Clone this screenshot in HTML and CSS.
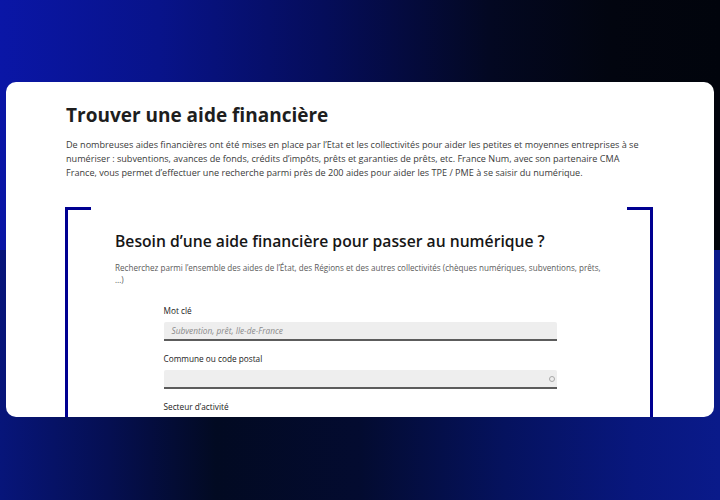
FILE: index.html
```html
<!DOCTYPE html>
<html lang="fr">
<head>
<meta charset="utf-8">
<title>Trouver une aide financière</title>
<link rel="stylesheet" href="styles.css">
</head>
<body>
<div class="page">
  <main class="card">
    <h1 class="title">Trouver une aide financière</h1>
    <p class="intro">De nombreuses aides financières ont été mises en place par l’Etat et les collectivités pour aider les petites et moyennes entreprises à se numériser : subventions, avances de fonds, crédits d’impôts, prêts et garanties de prêts, etc. France Num, avec son partenaire CMA<br>France, vous permet d’effectuer une recherche parmi près de 200 aides pour aider les TPE / PME à se saisir du numérique.</p>
    <section class="frame">
      <h2 class="frame-title">Besoin d’une aide financière pour passer au numérique ?</h2>
      <p class="frame-sub">Recherchez parmi l’ensemble des aides de l’État, des Régions et des autres collectivités (chèques numériques, subventions, prêts, …)</p>
      <form class="form">
        <div class="field">
          <label class="label">Mot clé</label>
          <div class="input"><span class="placeholder">Subvention, prêt, Ile-de-France</span></div>
        </div>
        <div class="field">
          <label class="label">Commune ou code postal</label>
          <div class="input input-end"><span class="spinner"></span></div>
        </div>
        <div class="field">
          <label class="label">Secteur d’activité</label>
          <div class="input"></div>
        </div>
      </form>
    </section>
  </main>
</div>
</body>
</html>
```

FILE: styles.css
```css
* { box-sizing: border-box; }
html, body { margin: 0; padding: 0; }
body {
  width: 720px;
  height: 500px;
  overflow: hidden;
  font-family: "Open Sans", "Noto Sans", sans-serif;
  background:
    linear-gradient(90deg, #0a16a6 0%, #08138a 22%, #050d5a 45%, #030822 68%, #02050f 85%, #01040c 100%) top / 100% 50% no-repeat,
    linear-gradient(90deg, #07157a 0%, #050f52 15%, #020a22 30%, #030b30 50%, #05125e 70%, #08177e 88%, #0a1a8a 100%) bottom / 100% 50% no-repeat;
}
.page {
  padding: 82px 6px 0;
}
.card {
  height: 335px;
  overflow: hidden;
  background: #ffffff;
  border-radius: 10px;
  padding: 21px 60px 0;
}
.title {
  margin: 0;
  font-size: 19px;
  line-height: 24px;
  font-weight: 700;
  color: #1e1e1e;
}
.intro {
  margin: 11px 0 0;
  font-size: 9.1px;
  line-height: 14px;
  color: #3a3a3a;
}
.frame {
  margin: 27px 0 0 -1px;
  width: 588px;
  border-left: 3px solid #000091;
  border-right: 3px solid #000091;
  background:
    linear-gradient(#000091, #000091) left top / 23px 3px no-repeat,
    linear-gradient(#000091, #000091) right top / 23px 3px no-repeat;
  padding: 22.5px 45px 40px 47px;
}
.frame-title {
  margin: 0;
  font-size: 15.7px;
  line-height: 22px;
  font-weight: 600;
  color: #161616;
}
.frame-sub {
  margin: 10px 0 0;
  font-size: 8.1px;
  line-height: 12px;
  color: #5a5a5a;
}
.form {
  margin: 19.5px auto 0;
  width: 393px;
  display: flex;
  flex-direction: column;
  gap: 12px;
}
.field {
  display: flex;
  flex-direction: column;
  gap: 6px;
}
.label {
  font-size: 8.25px;
  line-height: 11px;
  color: #222222;
}
.input {
  height: 19px;
  background: #eeeeee;
  border-bottom: 2px solid #5c5c5c;
  border-radius: 2px 2px 0 0;
  display: flex;
  align-items: center;
  padding: 0 8px;
}
.input-end {
  justify-content: flex-end;
  padding-right: 2px;
}
.placeholder {
  font-size: 8.3px;
  font-style: italic;
  color: #8a8a8a;
}
.spinner {
  width: 6px;
  height: 6px;
  border: 1px solid #a8a8a8;
  border-radius: 50%;
}
```
